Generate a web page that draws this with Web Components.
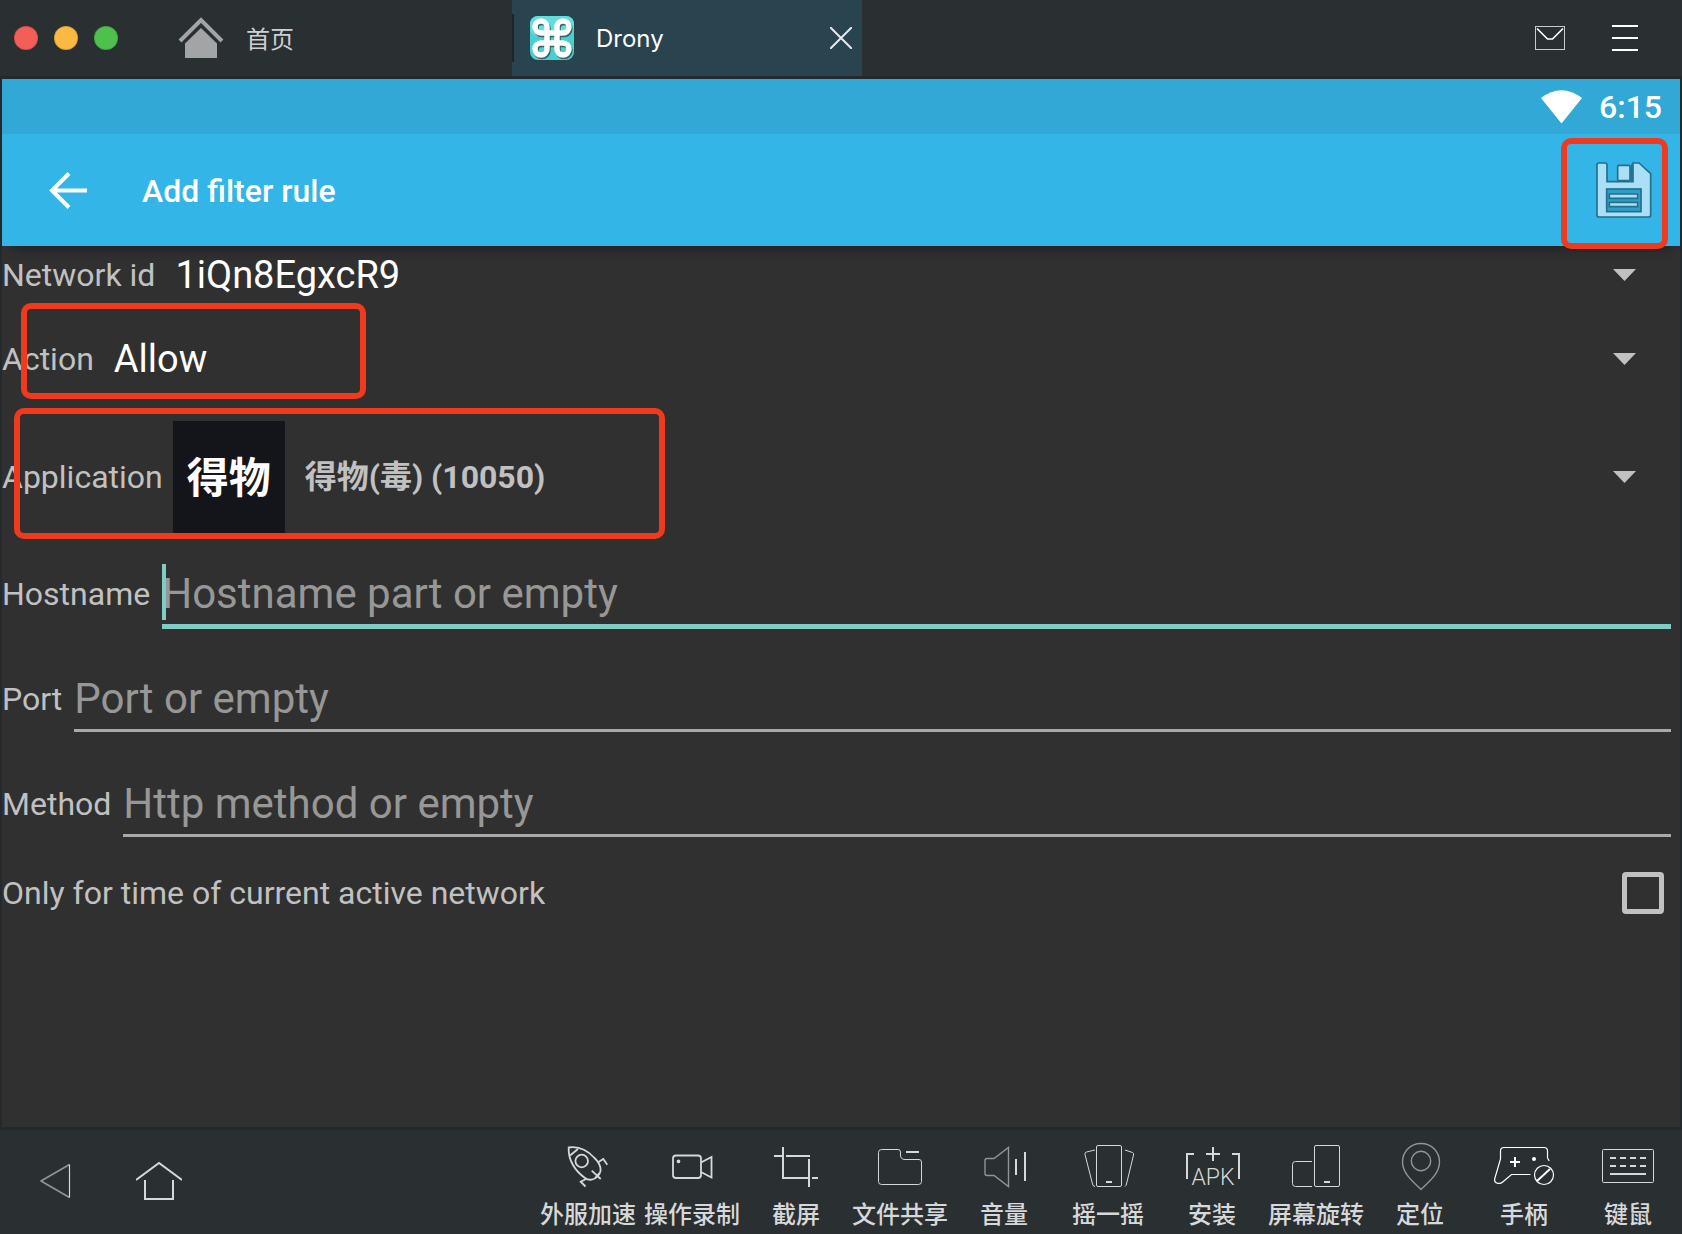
<!DOCTYPE html>
<html lang="zh-CN">
<head>
<meta charset="utf-8">
<title>Drony</title>
<style>
    :root {
        --bar-color: #2a2f32;
        --edge-color: #24292c;
        --panel-color: #303030;
        --app-color: #33b5e7;
        --status-color: #31a8d6;
        --label-color: #c1c1c1;
        --hint-color: #979797;
        --accent-color: #80cbc4;
        --mark-color: #f03a1e;
        --icon-color: #d6d8d9;
        --ui-font: Roboto, "Noto Sans CJK SC", sans-serif;
        --shell-font: "Noto Sans CJK SC", sans-serif;
    }
    body {
        margin: 0;
        background: var(--edge-color);
        font-family: var(--ui-font);
    }
</style>
</head>
<body>
<emulator-window>
    <window-bar slot="top">
        <window-tab>
            <svg slot="icon" viewBox="0 0 44 44" aria-hidden="true">
                <path d="M0 25 21 4 42 25" fill="none" stroke="#a3a4a6" stroke-width="4"/>
                <path d="M21 12 37 27.5V42H5V27.5Z" fill="#a3a4a6"/>
            </svg>
            首页
        </window-tab>
        <window-tab active>
            <svg slot="icon" viewBox="0 0 44 44" aria-hidden="true">
                <rect width="44" height="44" rx="8" fill="#49cfcf"/>
                <rect width="44" height="20" rx="8" fill="#62dcdc"/>
                <g fill="none" stroke-width="5.5">
                    <path transform="translate(1 1.5)" stroke="#37625f" d="M17 17V11a6 6 0 1 0-6 6H33a6 6 0 1 0-6-6V33a6 6 0 1 0 6-6H11a6 6 0 1 0 6 6V16"/>
                    <path stroke="#fff" d="M17 17V11a6 6 0 1 0-6 6H33a6 6 0 1 0-6-6V33a6 6 0 1 0 6-6H11a6 6 0 1 0 6 6V16"/>
                </g>
            </svg>
            Drony
        </window-tab>
    </window-bar>

    <status-bar>6:15</status-bar>
    <action-bar>Add filter rule</action-bar>

    <filter-form>
        <select-row label="Network id" value="1iQn8EgxcR9"></select-row>
        <select-row label="Action" value="Allow" class="action"></select-row>
        <select-row label="Application" value="得物(毒) (10050)" class="application">
            <app-logo slot="icon">得物</app-logo>
        </select-row>
        <text-row label="Hostname" hint="Hostname part or empty" active></text-row>
        <text-row label="Port" hint="Port or empty"></text-row>
        <text-row label="Method" hint="Http method or empty"></text-row>
        <check-row label="Only for time of current active network"></check-row>
    </filter-form>

    <tool-bar slot="bottom">
        <tool-item>
            <svg slot="icon" viewBox="0 0 60 48" stroke-width="1.8">
                <path d="M10.7 5.5C20 4 28 7 36 15.5C43 22 44.5 29 40 34C36.5 38 31 39 27 36C17 29 10 18 10.7 5.5Z"/>
                <path d="M12 13.5 20 7M40.5 20 45.3 17 49.3 22.7M29 36.5 22.7 39.7 27.5 44.5M33.7 28.7 42.7 37M41.5 31 37 36"/>
                <circle cx="23.7" cy="19" r="6.3"/>
            </svg>
            外服加速
        </tool-item>
        <tool-item>
            <svg slot="icon" viewBox="0 0 60 48" stroke-width="1.8">
                <rect x="11" y="13.5" width="28" height="22.5" rx="3"/>
                <path d="M39 20.5 49.5 15V35.5L39 30"/>
                <circle cx="16.5" cy="19.3" r="1" fill="currentColor"/>
            </svg>
            操作录制
        </tool-item>
        <tool-item>
            <svg slot="icon" viewBox="0 0 60 48" stroke-width="2">
                <path d="M17 5V36H43M43 17V45M8 14H16M20 14H44M46 36H52"/>
            </svg>
            截屏
        </tool-item>
        <tool-item>
            <svg slot="icon" viewBox="0 0 60 48" stroke-width="1">
                <path d="M11.5 7.5H28Q30.5 7.5 30.5 10V13Q30.5 17.5 35 17.5H49Q51.5 17.5 51.5 20V39.5Q51.5 42.5 48.5 42.5H11.5Q8.5 42.5 8.5 39.5V10.5Q8.5 7.5 11.5 7.5Z"/>
                <path d="M36 10H49" stroke-width="2"/>
            </svg>
            文件共享
        </tool-item>
        <tool-item>
            <svg slot="icon" viewBox="0 0 60 48" stroke-width="2">
                <path d="M13 16.5H20L34.5 5.5V44.5L20 33.5H13Q11 33.5 11 31.5V18.5Q11 16.5 13 16.5Z" stroke="#929597" stroke-width="1.4"/>
                <path d="M42 17V33M51 10V39"/>
            </svg>
            音量
        </tool-item>
        <tool-item>
            <svg slot="icon" viewBox="0 0 60 48" stroke-width="1">
                <rect x="18.5" y="3.5" width="25" height="41" rx="1.5"/>
                <path d="M17 8 8.5 10Q6.5 10.5 7 12.5L14.5 42Q15 44.5 17 44.5M47 8 54.5 10.5Q56 11 55.5 13L48.5 42Q48 44 47 44.5"/>
                <path d="M28 40H34" stroke-width="2"/>
            </svg>
            摇一摇
        </tool-item>
        <tool-item>
            <svg slot="icon" viewBox="0 0 60 48" stroke-width="2">
                <path d="M12 12H5V37M50 12H57V37M31 5V19M24 12H38"/>
                <text x="31" y="43" text-anchor="middle" font-family="Roboto, sans-serif" font-size="23" font-weight="300" fill="currentColor" stroke="none">APK</text>
            </svg>
            安装
        </tool-item>
        <tool-item>
            <svg slot="icon" viewBox="0 0 60 48" stroke-width="1">
                <rect x="28.5" y="3.5" width="25" height="41" rx="1.5"/>
                <path d="M26 19.5H9.5Q6.5 19.5 6.5 22.5V41.5Q6.5 44.5 9.5 44.5H26"/>
                <path d="M38 40H44" stroke-width="2"/>
            </svg>
            屏幕旋转
        </tool-item>
        <tool-item>
            <svg slot="icon" viewBox="0 0 60 48" stroke="#929597" stroke-width="1.4">
                <path d="M31 1.5C20 1.5 12.5 10 12.5 20C12.5 31 22 39 31 47.5C40 39 49.5 31 49.5 20C49.5 10 42 1.5 31 1.5Z"/>
                <circle cx="31" cy="19" r="9.7"/>
            </svg>
            定位
        </tool-item>
        <tool-item>
            <svg slot="icon" viewBox="0 0 60 48" stroke="#fff" stroke-width="1.2">
                <path d="M36.5 32.5H17.5L9 39.7C6 42.5-.5 42 .8 36.5L6.5 17V9Q6.5 5.5 10 5.5H50Q53.5 5.5 53.5 9V16L55.3 19"/>
                <path d="M21 15V25M16 20H26" stroke-width="2"/>
                <circle cx="40" cy="17" r="2" fill="#fff" stroke="none"/>
                <circle cx="50" cy="33" r="9.5"/>
                <path d="M43 39 56 27" stroke-width="2"/>
            </svg>
            手柄
        </tool-item>
        <tool-item>
            <svg slot="icon" viewBox="0 0 60 48" stroke-width="1">
                <rect x="4.5" y="7.5" width="51" height="33" rx="1"/>
                <path d="M12 16H18M22 16H28M32 16H38M42 16H48M12 24H18M22 24H28M32 24H38M42 24H48M12 32H48" stroke-width="2"/>
            </svg>
            键鼠
        </tool-item>
    </tool-bar>
</emulator-window>

<script>
    // every element below is only markup and styles, so they share one base
    class BaseElement extends HTMLElement {
        constructor() {
            super();
            this.attachShadow({ mode: 'open' });
        }

        connectedCallback() {
            this.shadowRoot.innerHTML = this.render();
        }
    }

    class EmulatorWindow extends BaseElement {
        render() {
            return `
                <style>
                    :host {
                        display: flex;
                        flex-direction: column;
                        min-height: 100vh;
                    }
                    main {
                        flex: 1;
                        display: flex;
                        flex-direction: column;
                        margin: 3px 2px;
                        background: var(--panel-color);
                    }
                </style>
                <slot name="top"></slot>
                <main><slot></slot></main>
                <slot name="bottom"></slot>
            `;
        }
    }

    class WindowBar extends BaseElement {
        render() {
            return `
                <style>
                    :host {
                        display: flex;
                        align-items: center;
                        height: 76px;
                        background: var(--bar-color);
                        font-family: var(--shell-font);
                    }
                    .lights {
                        display: flex;
                        gap: 16px;
                        padding: 0 44px 0 14px;
                    }
                    .lights button {
                        width: 24px;
                        height: 24px;
                        padding: 0;
                        border: 1px solid rgba(0, 0, 0, .12);
                        border-radius: 50%;
                    }
                    .close { background: #f35f57; }
                    .minimize { background: #fbb843; }
                    .zoom { background: #4ec14d; }
                    .actions {
                        display: flex;
                        align-items: center;
                        gap: 47px;
                        margin-left: auto;
                        padding-right: 44px;
                    }
                    .actions button {
                        padding: 0;
                        border: 0;
                        background: none;
                    }
                    svg {
                        display: block;
                        fill: none;
                    }
                </style>
                <div class="lights">
                    <button class="close" aria-label="关闭"></button>
                    <button class="minimize" aria-label="最小化"></button>
                    <button class="zoom" aria-label="缩放"></button>
                </div>
                <slot></slot>
                <div class="actions">
                    <button aria-label="消息">
                        <svg width="30" height="24" viewBox="0 0 30 24">
                            <rect x=".5" y=".5" width="29" height="23" stroke="#c8cacb"/>
                            <path d="M2 2.5 12.5 13H17.5L28 2.5" stroke="#fff" stroke-width="1.6"/>
                        </svg>
                    </button>
                    <button aria-label="菜单">
                        <svg width="26" height="26" viewBox="0 0 26 26" stroke="#fff" stroke-width="2">
                            <path d="M0 1H26M0 13H26M0 25H26"/>
                        </svg>
                    </button>
                </div>
            `;
        }
    }

    class WindowTab extends BaseElement {
        render() {
            const close = this.hasAttribute('active') ? `
                <button aria-label="关闭">
                    <svg width="22" height="22" viewBox="0 0 22 22" stroke="#e6e9ea" stroke-width="2">
                        <path d="M0 0 22 22M22 0 0 22"/>
                    </svg>
                </button>` : '';
            return `
                <style>
                    :host {
                        box-sizing: border-box;
                        display: flex;
                        align-items: center;
                        gap: 22px;
                        width: 350px;
                        height: 76px;
                        padding: 0 10px 0 18px;
                        color: #cfd0d3;
                        font-size: 24px;
                        line-height: 36px;
                    }
                    :host([active]) {
                        background: linear-gradient(#1e2429, #1e2429) 0 14px / 2px 48px no-repeat #29434f;
                        color: #fff;
                        font-family: Inter, sans-serif;
                    }
                    :host([active]) span { padding-top: 2px; }
                    ::slotted(svg) {
                        width: 44px;
                        height: 44px;
                        overflow: visible;
                    }
                    button {
                        margin-left: auto;
                        padding: 0;
                        border: 0;
                        background: none;
                    }
                    button svg { display: block; }
                </style>
                <slot name="icon"></slot>
                <span><slot></slot></span>
                ${close}
            `;
        }
    }

    class StatusBar extends BaseElement {
        render() {
            return `
                <style>
                    :host {
                        display: flex;
                        align-items: center;
                        justify-content: flex-end;
                        gap: 17px;
                        height: 55px;
                        padding-right: 18px;
                        background: var(--status-color);
                        color: #fff;
                        font-size: 32px;
                        font-weight: 500;
                    }
                </style>
                <svg width="41" height="34" viewBox="0 0 41 34" aria-hidden="true">
                    <path d="M0 8Q20.5-7.5 41 8L20.5 33.5Z" fill="#fff"/>
                </svg>
                <slot></slot>
            `;
        }
    }

    class ActionBar extends BaseElement {
        render() {
            return `
                <style>
                    :host {
                        position: relative;
                        z-index: 1;
                        display: flex;
                        align-items: center;
                        height: 112px;
                        padding: 0 12px 0 44px;
                        background: var(--app-color);
                        box-shadow: 0 12px 12px -10px rgba(0, 0, 0, .4);
                        color: #fff;
                    }
                    h1 {
                        flex: 1;
                        margin: 0 0 0 52px;
                        padding-top: 2px;
                        font-size: 32px;
                        font-weight: 500;
                        line-height: 40px;
                    }
                    button {
                        position: relative;
                        padding: 0;
                        border: 0;
                        background: none;
                    }
                    .save { padding: 26px 16px; }
                    svg { display: block; }
                    mark-box {
                        top: 4px;
                        right: 0;
                        bottom: -3px;
                        left: -18px;
                    }
                </style>
                <button aria-label="Back">
                    <svg width="44" height="44" viewBox="0 0 44 44" fill="none" stroke="#fff" stroke-width="4">
                        <path d="M24 5.5 7 22.5 24 39.5M7 22.5H42" transform="translate(-1)"/>
                    </svg>
                </button>
                <h1><slot></slot></h1>
                <button class="save" aria-label="Save">
                    <svg width="57" height="60" viewBox="340 482 171 180" stroke="#236f8c" stroke-width="5">
                        <path fill="#aadff5" d="M346 497Q346 491 352 491H370Q376 491 376 497V547H454V491H472L507 523V646Q507 653 500 653H353Q346 653 346 646Z"/>
                        <rect x="408" y="498" width="37" height="46" rx="4" fill="#aadff5"/>
                        <path d="M450 495V545"/>
                        <rect x="375" y="569" width="103" height="68" fill="#2c9fc9"/>
                        <path fill="#aadff5" d="M383 584H468V597H383ZM383 609H468V622H383Z"/>
                    </svg>
                    <mark-box></mark-box>
                </button>
            `;
        }
    }

    // red outline laid over a control
    class MarkBox extends BaseElement {
        render() {
            return `
                <style>
                    :host {
                        position: absolute;
                        box-sizing: border-box;
                        border: 6px solid var(--mark-color);
                        border-radius: 10px;
                        pointer-events: none;
                    }
                </style>
            `;
        }
    }

    class FilterForm extends BaseElement {
        render() {
            return `
                <style>
                    :host { display: block; }
                </style>
                <slot></slot>
            `;
        }
    }

    class SelectRow extends BaseElement {
        render() {
            const label = this.getAttribute('label');
            const value = this.getAttribute('value');
            return `
                <style>
                    :host {
                        position: relative;
                        display: flex;
                        align-items: center;
                        gap: 10px;
                        height: 58px;
                        color: #fff;
                    }
                    :host(.action) { height: 110px; }
                    :host(.application) {
                        height: 126px;
                        color: var(--label-color);
                    }
                    label {
                        color: var(--label-color);
                        font-size: 32px;
                    }
                    .box {
                        flex: 1;
                        display: grid;
                        align-items: center;
                    }
                    select {
                        grid-area: 1 / 1;
                        width: 100%;
                        height: 58px;
                        padding: 0 80px 0 10px;
                        border: 0;
                        appearance: none;
                        background: none;
                        color: inherit;
                        font-family: inherit;
                        font-size: 38px;
                    }
                    :host(.application) select {
                        font-size: 32px;
                        font-weight: bold;
                    }
                    svg {
                        grid-area: 1 / 1;
                        justify-self: end;
                        margin-right: 44px;
                        pointer-events: none;
                    }
                    mark-box { display: none; }
                    :host(.action) mark-box {
                        display: block;
                        top: -1px;
                        left: 19px;
                        width: 345px;
                        height: 96px;
                    }
                    :host(.application) mark-box {
                        display: block;
                        top: -6px;
                        left: 12px;
                        width: 651px;
                        height: 131px;
                    }
                </style>
                <label for="value">${label}</label>
                <slot name="icon"></slot>
                <div class="box">
                    <select id="value"><option>${value}</option></select>
                    <svg width="23" height="12" viewBox="0 0 23 12"><path d="M0 0H23L11.5 12Z" fill="#c1c1c1"/></svg>
                </div>
                <mark-box></mark-box>
            `;
        }
    }

    class AppLogo extends BaseElement {
        render() {
            return `
                <style>
                    :host {
                        box-sizing: border-box;
                        display: grid;
                        place-items: center;
                        width: 112px;
                        height: 112px;
                        padding-bottom: 4px;
                        background: #14151a;
                        color: #fff;
                        font: bold 42px/60px var(--shell-font);
                    }
                </style>
                <span><slot></slot></span>
            `;
        }
    }

    class TextRow extends BaseElement {
        render() {
            const label = this.getAttribute('label');
            const hint = this.getAttribute('hint');
            return `
                <style>
                    :host {
                        box-sizing: border-box;
                        display: flex;
                        align-items: flex-start;
                        gap: 12px;
                        height: 105px;
                        padding: 24px 9px 0 0;
                    }
                    label {
                        color: var(--label-color);
                        font-size: 32px;
                        line-height: 60px;
                    }
                    .field {
                        position: relative;
                        flex: 1;
                        border-bottom: 3px solid #a9a9a9;
                    }
                    input {
                        display: block;
                        box-sizing: border-box;
                        width: 100%;
                        height: 60px;
                        padding: 0 0 2px;
                        border: 0;
                        outline: 0;
                        background: none;
                        color: #fff;
                        font-family: inherit;
                        font-size: 42px;
                    }
                    input::placeholder { color: var(--hint-color); }
                    :host([active]) .field { border-bottom: 5px solid var(--accent-color); }
                    :host([active]) .field::before {
                        content: "";
                        position: absolute;
                        top: 0;
                        bottom: 4px;
                        left: 0;
                        width: 4px;
                        background: var(--accent-color);
                    }
                </style>
                <label for="value">${label}</label>
                <div class="field"><input id="value" type="text" placeholder="${hint}"></div>
            `;
        }
    }

    class CheckRow extends BaseElement {
        render() {
            return `
                <style>
                    :host {
                        display: flex;
                        align-items: center;
                        justify-content: space-between;
                        height: 75px;
                        padding-right: 16px;
                        color: var(--label-color);
                        font-size: 32px;
                    }
                    input {
                        box-sizing: border-box;
                        width: 42px;
                        height: 42px;
                        margin: 0;
                        border: 5px solid #c1c1c1;
                        border-radius: 4px;
                        appearance: none;
                    }
                    input:checked { background: var(--accent-color); }
                </style>
                <label for="value">${this.getAttribute('label')}</label>
                <input id="value" type="checkbox">
            `;
        }
    }

    class ToolBar extends BaseElement {
        render() {
            return `
                <style>
                    :host {
                        display: flex;
                        height: 104px;
                        padding: 0 2px 0 32px;
                        background: var(--bar-color);
                        font-family: var(--shell-font);
                    }
                    nav {
                        flex: 1;
                        display: flex;
                        align-items: center;
                        gap: 58px;
                        padding-bottom: 3px;
                    }
                    button {
                        padding: 0;
                        border: 0;
                        background: none;
                    }
                    svg {
                        display: block;
                        fill: none;
                    }
                    .tools { display: flex; }
                </style>
                <nav>
                    <button aria-label="返回">
                        <svg width="46" height="46" viewBox="0 0 46 46" stroke-linejoin="round" stroke-width="1.6">
                            <path d="M37.5 6.5 9 23 37.5 39.5" stroke="#929597"/>
                            <path d="M37.5 6.5V39.5" stroke="#d6d8d9" stroke-width="1.2"/>
                        </svg>
                    </button>
                    <button aria-label="主页">
                        <svg width="46" height="46" viewBox="0 0 46 46" stroke="#d6d8d9" stroke-width="2">
                            <path d="M0 22 23 5 46 22M9 22V41H37V22"/>
                        </svg>
                    </button>
                </nav>
                <div class="tools"><slot></slot></div>
            `;
        }
    }

    class ToolItem extends BaseElement {
        render() {
            return `
                <style>
                    :host { display: block; }
                    button {
                        display: flex;
                        flex-direction: column;
                        align-items: center;
                        gap: 5px;
                        width: 104px;
                        height: 104px;
                        padding: 12px 0 0;
                        border: 0;
                        background: none;
                        color: var(--icon-color);
                        font-family: inherit;
                        font-size: 24px;
                        font-weight: 500;
                        line-height: 36px;
                        white-space: nowrap;
                    }
                    ::slotted(svg) {
                        flex: none;
                        width: 60px;
                        height: 48px;
                        overflow: visible;
                        fill: none;
                        stroke: currentColor;
                    }
                    ::slotted(svg[stroke="#fff"]) { stroke: #fff; }
                    ::slotted(svg[stroke="#929597"]) { stroke: #929597; }
                </style>
                <button>
                    <slot name="icon"></slot>
                    <span><slot></slot></span>
                </button>
            `;
        }
    }

    customElements.define('emulator-window', EmulatorWindow);
    customElements.define('window-bar', WindowBar);
    customElements.define('window-tab', WindowTab);
    customElements.define('status-bar', StatusBar);
    customElements.define('action-bar', ActionBar);
    customElements.define('mark-box', MarkBox);
    customElements.define('filter-form', FilterForm);
    customElements.define('select-row', SelectRow);
    customElements.define('app-logo', AppLogo);
    customElements.define('text-row', TextRow);
    customElements.define('check-row', CheckRow);
    customElements.define('tool-bar', ToolBar);
    customElements.define('tool-item', ToolItem);
</script>
</body>
</html>
